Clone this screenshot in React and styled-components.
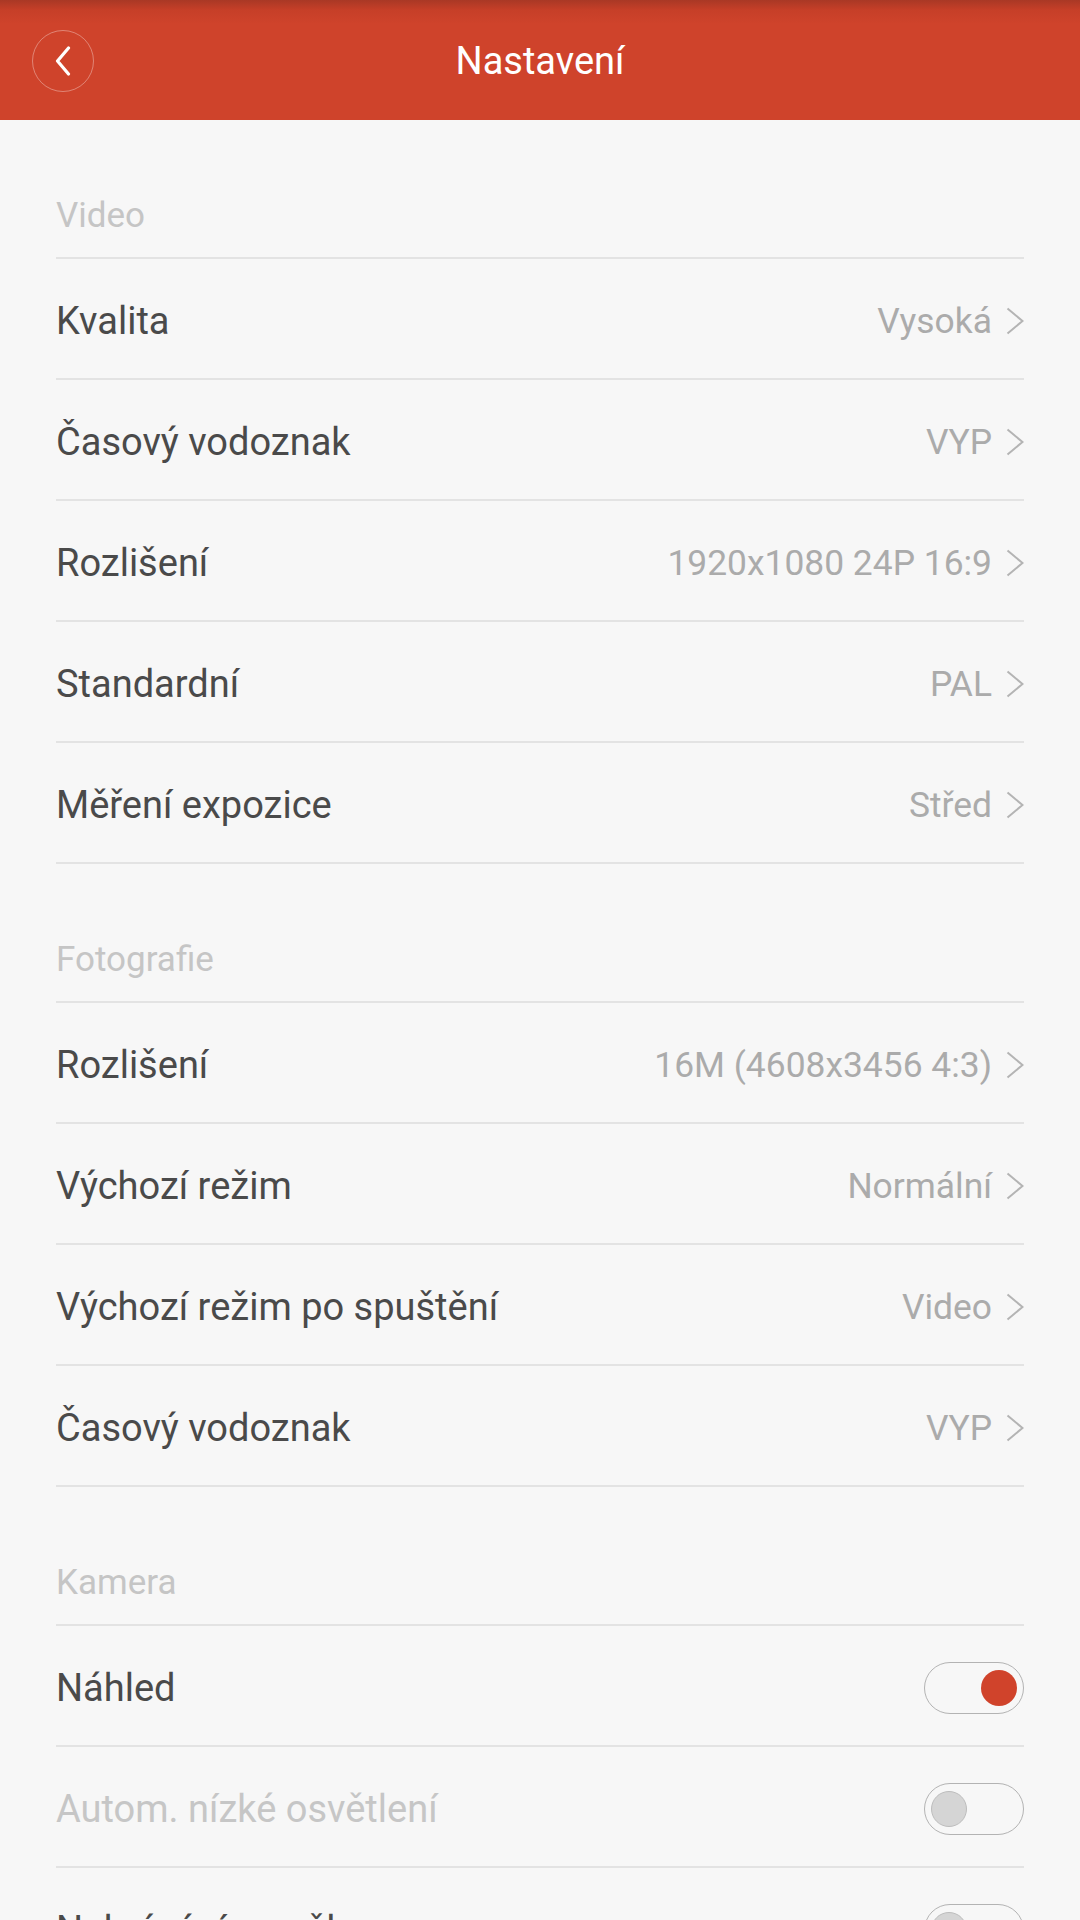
import React from 'react';
import styled, { createGlobalStyle } from 'styled-components';

const GlobalStyle = createGlobalStyle`
  html, body {
    margin: 0;
    padding: 0;
    background: #f7f7f7;
    overflow: hidden;
  }
  body {
    font-family: Roboto, "Noto Sans", "Liberation Sans", sans-serif;
  }
`;

const Page = styled.div`
  width: 1080px;
  height: 1920px;
  background: #f7f7f7;
  display: flex;
  flex-direction: column;
  overflow: hidden;
`;

const Header = styled.header`
  height: 120px;
  flex-shrink: 0;
  display: flex;
  align-items: center;
  padding: 0 32px;
  position: relative;
  background: linear-gradient(#a93825 0px, #c63f28 10px, #cf432b 24px, #cf432b 100%);
`;

const BackButton = styled.button`
  width: 62px;
  height: 62px;
  border-radius: 50%;
  border: 1.5px solid rgba(255, 255, 255, 0.35);
  background: transparent;
  display: flex;
  align-items: center;
  justify-content: center;
  padding: 0;
  margin-top: 2px;
  cursor: pointer;
`;

const Title = styled.h1`
  position: absolute;
  left: 0;
  right: 0;
  top: 0;
  bottom: 0;
  margin: 0;
  display: flex;
  align-items: center;
  justify-content: center;
  color: #ffffff;
  font-size: 38px;
  font-weight: 400;
  pointer-events: none;
  padding-top: 2px;
`;

const Content = styled.main`
  padding: 0 56px;
  display: flex;
  flex-direction: column;
`;

const SectionTitle = styled.div`
  height: 139px;
  box-sizing: border-box;
  display: flex;
  align-items: flex-end;
  padding-bottom: 21px;
  border-bottom: 2px solid #e3e3e3;
  color: #c5c5c5;
  font-size: 35px;
  line-height: 40px;
`;

const Row = styled.div`
  height: 121px;
  box-sizing: border-box;
  display: flex;
  align-items: center;
  justify-content: space-between;
  padding-top: 4px;
  border-bottom: 2px solid #e3e3e3;
`;

const Label = styled.span`
  font-size: 38px;
  color: ${p => (p.$disabled ? '#c6c6c6' : '#4a4a4a')};
  white-space: nowrap;
`;

const ValueWrap = styled.div`
  display: flex;
  align-items: center;
  gap: 14px;
`;

const Value = styled.span`
  font-size: 35.4px;
  color: #ababab;
  white-space: nowrap;
`;

const Toggle = styled.div`
  width: 100px;
  height: 52px;
  box-sizing: border-box;
  border-radius: 26px;
  border: 1.5px solid #b3b3b3;
  display: flex;
  align-items: center;
  justify-content: ${p => (p.$on ? 'flex-end' : 'flex-start')};
  padding: 0 6px;
`;

const Knob = styled.div`
  width: 36px;
  height: 36px;
  border-radius: 50%;
  box-sizing: border-box;
  background: ${p => (p.$on ? '#d0432b' : '#d5d5d5')};
  border: ${p => (p.$on ? 'none' : '1px solid #bdbdbd')};
`;

const Chevron = () => (
  <svg width="18" height="28" viewBox="0 0 18 28">
    <path d="M1.5 1.5 L16.5 14 L1.5 26.5" fill="none" stroke="#b4b4b4" strokeWidth="2" />
  </svg>
);

const BackIcon = () => (
  <svg width="18" height="30" viewBox="0 0 18 30">
    <path d="M14.5 2 L3.5 15 L14.5 28" fill="none" stroke="#ffffff" strokeWidth="3.2" strokeLinecap="round" strokeLinejoin="round" />
  </svg>
);

const sections = [
  {
    title: 'Video',
    items: [
      { label: 'Kvalita', value: 'Vysoká' },
      { label: 'Časový vodoznak', value: 'VYP' },
      { label: 'Rozlišení', value: '1920x1080 24P 16:9' },
      { label: 'Standardní', value: 'PAL' },
      { label: 'Měření expozice', value: 'Střed' },
    ],
  },
  {
    title: 'Fotografie',
    items: [
      { label: 'Rozlišení', value: '16M (4608x3456 4:3)' },
      { label: 'Výchozí režim', value: 'Normální' },
      { label: 'Výchozí režim po spuštění', value: 'Video' },
      { label: 'Časový vodoznak', value: 'VYP' },
    ],
  },
  {
    title: 'Kamera',
    items: [
      { label: 'Náhled', toggle: true, on: true },
      { label: 'Autom. nízké osvětlení', toggle: true, on: false, disabled: true },
      { label: 'Nahrávání smyčky', toggle: true, on: false },
    ],
  },
];

export default function App() {
  return (
    <Page>
      <GlobalStyle />
      <Header>
        <BackButton aria-label="Zpět">
          <BackIcon />
        </BackButton>
        <Title>Nastavení</Title>
      </Header>
      <Content>
        {sections.map(section => (
          <React.Fragment key={section.title}>
            <SectionTitle>{section.title}</SectionTitle>
            {section.items.map((item, i) => (
              <Row key={i}>
                <Label $disabled={item.disabled}>{item.label}</Label>
                {item.toggle ? (
                  <Toggle $on={item.on}>
                    <Knob $on={item.on} />
                  </Toggle>
                ) : (
                  <ValueWrap>
                    <Value>{item.value}</Value>
                    <Chevron />
                  </ValueWrap>
                )}
              </Row>
            ))}
          </React.Fragment>
        ))}
      </Content>
    </Page>
  );
}
